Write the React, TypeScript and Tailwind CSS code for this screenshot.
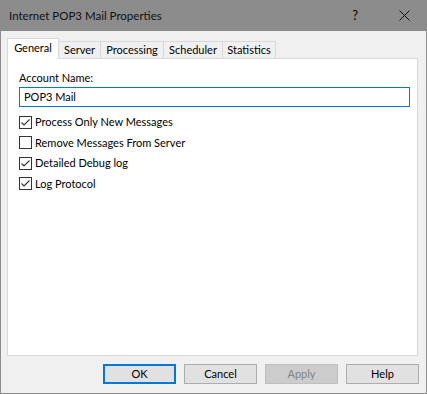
import React from 'react';

const tabs = [
  { label: 'General', width: 'w-[52px]', active: true },
  { label: 'Server', width: 'w-[42px]', active: false },
  { label: 'Processing', width: 'w-[63px]', active: false },
  { label: 'Scheduler', width: 'w-[59px]', active: false },
  { label: 'Statistics', width: 'w-[53px]', active: false },
];

const options = [
  { label: 'Process Only New Messages', checked: true },
  { label: 'Remove Messages From Server', checked: false },
  { label: 'Detailed Debug log', checked: true },
  { label: 'Log Protocol', checked: true },
];

function CheckBox({ checked }: { checked: boolean }) {
  return (
    <span className="w-[13px] h-[13px] border border-[#333333] bg-white flex items-center justify-center shrink-0">
      {checked && (
        <svg width="11" height="11" viewBox="0 0 11 11">
          <polyline points="1.5,5.5 4,8 9.5,2.5" fill="none" stroke="#333333" strokeWidth="1.1" />
        </svg>
      )}
    </span>
  );
}

function DialogButton({ label, primary, disabled }: { label: string; primary?: boolean; disabled?: boolean }) {
  let cls = 'border border-[#adadad] bg-[#e1e1e1] text-black';
  if (primary) cls = 'border-2 border-[#0078d7] bg-[#e1e1e1] text-black';
  if (disabled) cls = 'border border-[#bfbfbf] bg-[#cccccc] text-[#838383]';
  return (
    <div className={`w-[73px] h-[20px] flex items-center justify-center ${cls}`}>
      {label}
    </div>
  );
}

export default function App() {
  return (
    <div
      className="w-[427px] h-[394px] bg-[#f0f0f0] border-x border-b border-[#8c8c8c] flex flex-col text-[11px] text-black overflow-hidden"
      style={{ fontFamily: 'Lato, "Liberation Sans", sans-serif' }}
    >
      {/* Title bar */}
      <div className="h-[31px] bg-[#8c8c8c] -mx-px flex items-center shrink-0">
        <span className="ml-[9px] text-[11.5px] text-[#111]">Internet POP3 Mail Properties</span>
        <span className="ml-auto mr-[41px] text-[13px]">?</span>
        <svg className="mr-[17px]" width="11" height="11" viewBox="0 0 11 11">
          <path d="M0.5 0.5 L10.5 10.5 M10.5 0.5 L0.5 10.5" stroke="#111" strokeWidth="1" />
        </svg>
      </div>

      <div className="px-[6px] flex flex-col">
        {/* Tabs */}
        <div className="mt-[7px] h-[20px] flex items-end relative z-10">
          {tabs.map((tab) =>
            tab.active ? (
              <div
                key={tab.label}
                className={`${tab.width} h-[21px] -mb-px bg-white border-x border-t border-[#d9d9d9] flex items-center justify-center pb-[2px]`}
              >
                {tab.label}
              </div>
            ) : (
              <div
                key={tab.label}
                className={`${tab.width} h-[17px] bg-[#f0f0f0] border-t border-r border-[#d9d9d9] flex items-center justify-center pt-[1px]`}
              >
                {tab.label}
              </div>
            )
          )}
        </div>

        {/* Panel */}
        <div className="w-[411px] h-[298px] bg-white border border-[#d9d9d9] px-[11px] pt-[11px]">
          <div className="h-[16px] leading-[16px]">Account Name:</div>
          <div className="mt-[1px] w-[391px] h-[20px] border border-[#0078d7] flex items-center pl-[4px]">
            POP3 Mail
          </div>
          <div className="mt-[5px] flex flex-col">
            {options.map((opt) => (
              <div key={opt.label} className="h-[20.5px] flex items-center gap-[3px]">
                <CheckBox checked={opt.checked} />
                <span>{opt.label}</span>
              </div>
            ))}
          </div>
        </div>

        {/* Buttons */}
        <div className="mt-[8px] flex justify-end gap-[8px] pr-[1px]">
          <DialogButton label="OK" primary />
          <DialogButton label="Cancel" />
          <DialogButton label="Apply" disabled />
          <DialogButton label="Help" />
        </div>
      </div>
    </div>
  );
}
